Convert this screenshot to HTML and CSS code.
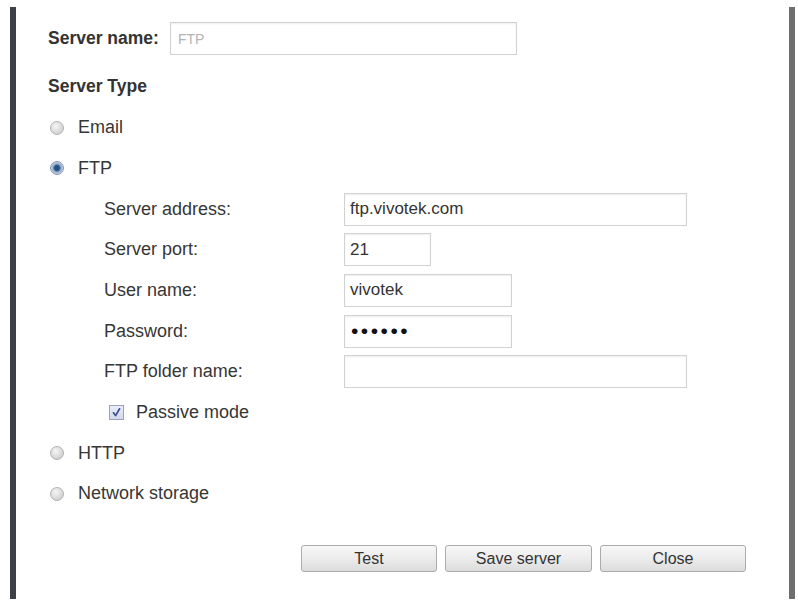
FILE: index.html
```html
<!DOCTYPE html>
<html>
<head>
<meta charset="utf-8">
<link rel="stylesheet" href="styles.css">
</head>
<body>
<div class="frame">
  <div class="row name-row">
    <span class="name-label">Server name:</span>
    <input class="field name-field" type="text" value="FTP" readonly>
  </div>
  <div class="row title-row">Server Type</div>

  <div class="row opt"><span class="radio"></span><span>Email</span></div>
  <div class="row opt"><span class="radio on"></span><span>FTP</span></div>

  <div class="row sub"><span class="lbl">Server address:</span><input class="field w-long" type="text" value="ftp.vivotek.com"></div>
  <div class="row sub"><span class="lbl">Server port:</span><input class="field w-port" type="text" value="21"></div>
  <div class="row sub"><span class="lbl">User name:</span><input class="field w-mid" type="text" value="vivotek"></div>
  <div class="row sub"><span class="lbl">Password:</span><input class="field w-mid pw" type="password" value="vivote"></div>
  <div class="row sub"><span class="lbl">FTP folder name:</span><input class="field w-long" type="text" value=""></div>
  <div class="row chk-row">
    <span class="check"><svg width="13" height="13" viewBox="0 0 13 13"><path d="M3.5 6.8 L5.6 9.6 L9.6 2.8" fill="none" stroke="#3b4f8f" stroke-width="1.7" stroke-linecap="round" stroke-linejoin="round"/></svg></span>
    <span>Passive mode</span>
  </div>

  <div class="row opt"><span class="radio"></span><span>HTTP</span></div>
  <div class="row opt"><span class="radio"></span><span>Network storage</span></div>

  <div class="buttons">
    <button class="btn b-test">Test</button>
    <button class="btn b-save">Save server</button>
    <button class="btn b-close">Close</button>
  </div>
</div>
</body>
</html>
```

FILE: styles.css
```css
html, body {
  margin: 0;
  padding: 0;
  background: #ffffff;
}
body {
  font-family: "Liberation Sans", Arial, sans-serif;
  font-size: 18px;
  color: #363636;
}
.frame {
  margin: 7px 0 0 10px;
  width: 785px;
  height: 592px;
  box-sizing: border-box;
  border-left: 6px solid #3b4146;
  border-right: 6px solid #6f6f6f;
  padding: 11px 43px 0 32px;
  display: flex;
  flex-direction: column;
}
.row {
  display: flex;
  align-items: center;
  height: 40.67px;
  flex: none;
}
.name-row {
  height: 41px;
}
.name-label {
  font-weight: bold;
  font-size: 17.5px;
  color: #333;
  width: 122px;
  flex: none;
}
.title-row {
  height: 41px;
  margin-top: 6.5px;
  margin-bottom: 1px;
  font-weight: bold;
  font-size: 17.5px;
  color: #333;
}
.field {
  box-sizing: border-box;
  height: 33px;
  border: 1px solid #d2d2d2;
  background: #fff;
  box-shadow: inset 0 1px 2px rgba(0,0,0,0.07);
  font-family: "Liberation Sans", Arial, sans-serif;
  font-size: 17px;
  color: #333;
  padding: 0 5px;
  margin: 0;
  outline: none;
}
.name-field {
  width: 347px;
  font-size: 14px;
  color: #b3b3b3;
  padding-left: 7px;
}
.opt {
  padding-left: 2px;
}
.radio {
  width: 14px;
  height: 14px;
  box-sizing: border-box;
  border-radius: 50%;
  border: 1px solid #b3b3b3;
  background: radial-gradient(circle at 40% 35%, #f6f6f6 0%, #dadada 55%, #c2c2c2 100%);
  margin-right: 14px;
  flex: none;
}
.radio.on {
  border: 1px solid #8499b3;
  background: radial-gradient(circle at 50% 50%, #1c4677 0%, #2c5d92 32%, #8ea6c2 46%, #cfdae6 75%, #aebdd0 100%);
}
.sub {
  padding-left: 56px;
}
.lbl {
  width: 240px;
  flex: none;
}
.w-long { width: 343px; }
.w-port { width: 87px; }
.w-mid { width: 168px; }
.pw {
  font-size: 21px;
  letter-spacing: 2.5px;
  padding-left: 6px;
  color: #111;
}
.chk-row {
  padding-left: 61px;
}
.check {
  width: 15px;
  height: 15px;
  box-sizing: border-box;
  border: 1px solid #9aa4b8;
  background: linear-gradient(#e9edf7, #d3d9ec);
  margin-right: 12px;
  display: flex;
  align-items: center;
  justify-content: center;
  flex: none;
}
.check svg { display: block; }
.buttons {
  display: flex;
  justify-content: flex-end;
  gap: 8px;
  margin-top: 31px;
}
.btn {
  height: 27px;
  box-sizing: border-box;
  border: 1px solid #ababab;
  border-radius: 3px;
  background: linear-gradient(#f7f7f7 0%, #ececec 50%, #dcdcdc 100%);
  font-family: "Liberation Sans", Arial, sans-serif;
  font-size: 16px;
  color: #333;
  padding: 0;
  margin: 0;
}
.b-test { width: 136px; }
.b-save { width: 147px; }
.b-close { width: 146px; }
```
